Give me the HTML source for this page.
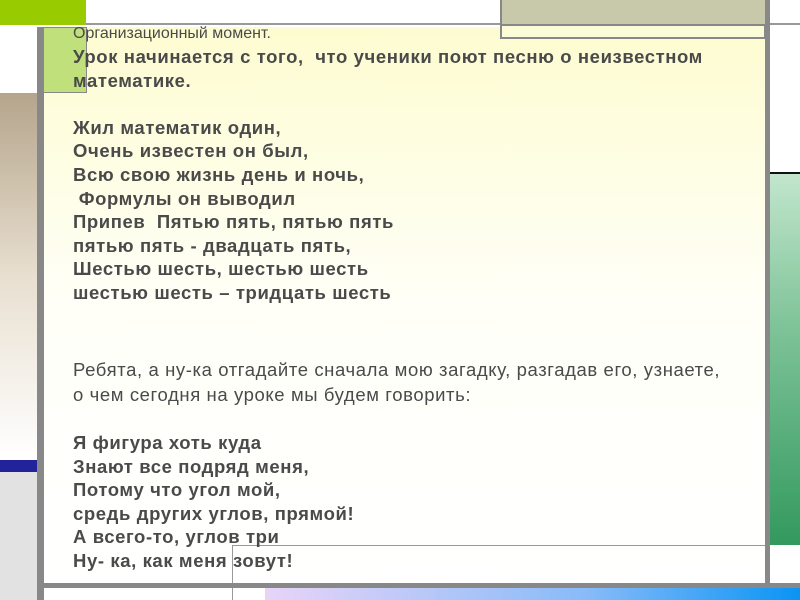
<!DOCTYPE html>
<html><head><meta charset="utf-8"><style>
*{margin:0;padding:0;box-sizing:border-box}
body{width:800px;height:600px;overflow:hidden;background:#fff;position:relative;font-family:"Liberation Sans",sans-serif}
.a{position:absolute}
.t{position:absolute;left:73px;font-size:18.5px;letter-spacing:0.6px;color:#4a4a4a;white-space:pre;line-height:23.6px}
.b{font-weight:bold}
</style></head><body>
<div class="a" style="left:0;top:0;width:86px;height:25px;background:#99cc00"></div>
<div class="a" style="left:86px;top:0;width:414px;height:25px;background:#fff;border-bottom:2px solid #999"></div>
<div class="a" style="left:500px;top:0;width:266px;height:26px;background:#c8c8aa;border-bottom:2px solid #888;border-left:2px solid #888"></div>
<div class="a" style="left:40px;top:27px;width:726px;height:557px;background:linear-gradient(#fdfcd0,#fffff8 50%,#fff)"></div>
<div class="a" style="left:500px;top:26px;width:266px;height:13px;border:2px solid #888;border-top:0;background:#fcfcd8"></div>
<div class="a" style="left:43px;top:27px;width:44px;height:66px;background:#bfe07a;border:1px solid #888"></div>
<div class="a" style="left:0;top:27px;width:37px;height:66px;background:#fff"></div>
<div class="a" style="left:0;top:93px;width:37px;height:367px;background:linear-gradient(#b5a58c,#e8dfd0 50%,#fff)"></div>
<div class="a" style="left:0;top:460px;width:37px;height:12px;background:#22229a"></div>
<div class="a" style="left:0;top:472px;width:37px;height:128px;background:#e2e2e2"></div>
<div class="a" style="left:37px;top:27px;width:7px;height:573px;background:#888"></div>
<div class="a" style="left:765px;top:0;width:5px;height:588px;background:#888"></div>
<div class="a" style="left:770px;top:0;width:30px;height:25px;background:#fff;border-bottom:2px solid #999"></div>
<div class="a" style="left:770px;top:172px;width:30px;height:2px;background:#111"></div>
<div class="a" style="left:770px;top:174px;width:30px;height:371px;background:linear-gradient(#c2e6cc,#80c49a 40%,#33995e)"></div>
<div class="a" style="left:232px;top:545px;width:533px;height:1px;background:#999"></div>
<div class="a" style="left:232px;top:545px;width:1px;height:55px;background:#999"></div>
<div class="a" style="left:40px;top:583px;width:760px;height:5px;background:#888"></div>
<div class="a" style="left:265px;top:588px;width:535px;height:12px;background:linear-gradient(90deg,#e8d4f8,#88bbf8 60%,#0a94f4)"></div>
<div class="t" style="top:22px;font-size:16px;letter-spacing:0">Организационный момент.</div>
<div class="t b" style="top:45px">Урок начинается с того,  что ученики поют песню о неизвестном
математике.

Жил математик один,
Очень известен он был,
Всю свою жизнь день и ночь,
 Формулы он выводил
Припев  Пятью пять, пятью пять
пятью пять - двадцать пять,
Шестью шесть, шестью шесть
шестью шесть – тридцать шесть</div>
<div class="t" style="top:358px;line-height:24.5px">Ребята, а ну-ка отгадайте сначала мою загадку, разгадав его, узнаете,
о чем сегодня на уроке мы будем говорить:</div>
<div class="t b" style="top:431px">Я фигура хоть куда
Знают все подряд меня,
Потому что угол мой,
средь других углов, прямой!
А всего-то, углов три
Ну- ка, как меня зовут!</div>
</body></html>
